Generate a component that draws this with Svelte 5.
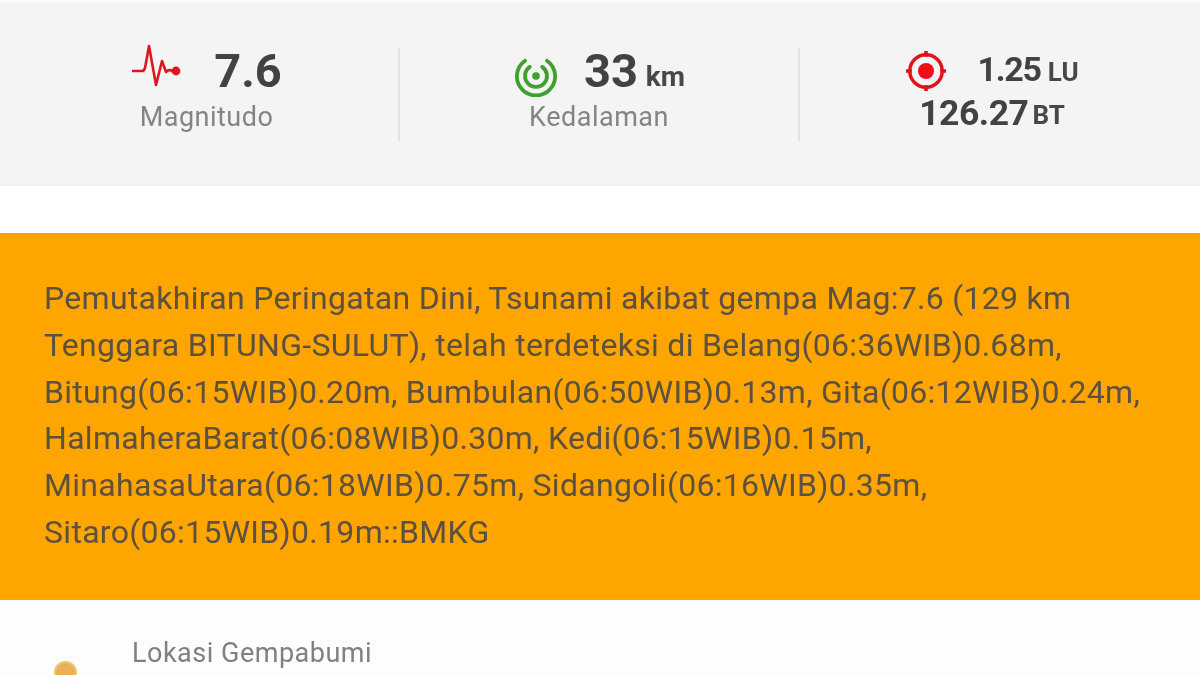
<script>
  const lines = [
    'Pemutakhiran Peringatan Dini, Tsunami akibat gempa Mag:7.6 (129 km',
    'Tenggara BITUNG-SULUT), telah terdeteksi di Belang(06:36WIB)0.68m,',
    'Bitung(06:15WIB)0.20m, Bumbulan(06:50WIB)0.13m, Gita(06:12WIB)0.24m,',
    'HalmaheraBarat(06:08WIB)0.30m, Kedi(06:15WIB)0.15m,',
    'MinahasaUtara(06:18WIB)0.75m, Sidangoli(06:16WIB)0.35m,',
    'Sitaro(06:15WIB)0.19m::BMKG'
  ];
</script>

<div class="page">
  <section class="stats">
    <div class="stat first">
      <div class="top">
        <svg class="ico pulse" viewBox="0 0 50 44" width="50" height="44">
          <path d="M1 27 H11 Q13 27 14 24 L18 2 L25 41 L31 17 L35 28 Q38 25 41 27 L46 27" fill="none" stroke="#e0161e" stroke-width="2.6" stroke-linejoin="round"/>
          <circle cx="45" cy="27" r="4.4" fill="#e5131c"/>
        </svg>
        <span class="value big">7.6</span>
      </div>
      <div class="label">Magnitudo</div>
    </div>
    <div class="stat second-col">
      <div class="top">
        <svg class="ico ring" viewBox="0 0 44 44" width="42" height="42">
          <g fill="none" stroke="#3fa02c" stroke-linecap="round">
            <path d="M10.5 6 A20 20 0 1 0 33.5 6" stroke-width="4"/>
            <path d="M15.5 12.5 A11.5 11.5 0 1 0 28.5 12.5" stroke-width="4"/>
          </g>
          <circle cx="22" cy="22" r="4" fill="#3fa02c"/>
        </svg>
        <span class="value big">33</span><span class="unit km">km</span>
      </div>
      <div class="label">Kedalaman</div>
    </div>
    <div class="stat coords">
      <div class="top">
        <svg class="ico target" viewBox="0 0 44 44" width="42" height="42">
          <circle cx="22" cy="22" r="17" fill="none" stroke="#e0151c" stroke-width="3.6"/>
          <circle cx="22" cy="22" r="8.4" fill="#ee0f18"/>
          <path d="M22 1 V7 M22 37 V43 M1 22 H7 M37 22 H43" stroke="#d9151c" stroke-width="3.8"/>
        </svg>
        <span class="value lat">1.25</span><span class="unit">LU</span>
      </div>
      <div class="second"><span class="value lon">126.27</span><span class="unit bt">BT</span></div>
    </div>
  </section>

  <div class="gap"></div>

  <section class="alert">
    {#each lines as line}
      <div>{line}</div>
    {/each}
  </section>

  <section class="row">
    <div class="pin"></div>
    <div class="rowlabel">Lokasi Gempabumi</div>
  </section>
</div>

<style>
  :global(body) { margin: 0; background: #fff; }
  .page {
    width: 1200px;
    height: 675px;
    overflow: hidden;
    font-family: Roboto, "Liberation Sans", sans-serif;
    display: flex;
    flex-direction: column;
    background: #fdfdfd;
    filter: blur(0.45px);
  }
  .stats {
    height: 183px;
    margin-top: 2px;
    flex: none;
    background: #f4f4f5;
    border-bottom: 1px solid #efefef;
    display: grid;
    grid-template-columns: 398px 400px 402px;
  }
  .stat {
    margin-top: 46px;
    height: 93px;
    border-left: 2px solid #e2e2e2;
    display: flex;
    flex-direction: column;
    align-items: center;
    box-sizing: border-box;
    color: #444;
  }
  .stat.first { border-left: none; padding-left: 15px; }
  .stat.coords { padding-right: 16px; }
  .top { display: flex; align-items: center; height: 44px; }
  .ico { flex: none; }
  .pulse { margin-right: 33px; margin-bottom: 8px; }
  .ring { margin-left: 2px; margin-right: 27px; margin-top: 12px; }
  .target { margin-right: 30px; margin-top: 2px; }
  .value { font-weight: 700; color: #424242; }
  .big { font-size: 47px; }
  .lat { font-size: 34px; letter-spacing: -1.25px; margin-top: -3px; }
  .lon { font-size: 35.5px; letter-spacing: -0.5px; }
  .unit { font-weight: 700; font-size: 26px; color: #484848; margin-left: 7px; margin-top: 3px; }
  .bt { margin-left: 4px; }
  .km { margin-left: 8px; margin-top: 12px; font-size: 28px; }
  .label { font-size: 27px; letter-spacing: 0.5px; color: #848484; margin-top: 7px; line-height: 36px; }
  .second { display: flex; align-items: center; height: 38px; margin-top: 2px; }
  .gap { height: 47px; background: #fff; flex: none; }
  .alert {
    flex: none;
    height: 367px;
    box-sizing: border-box;
    background: #fea500;
    padding: 42px 44px 0;
    font-size: 32px;
    letter-spacing: 0.3px;
    line-height: 46.8px;
    color: #5c5140;
    white-space: nowrap;
  }
  .row { position: relative; flex: 1; }
  .rowlabel { font-size: 27px; letter-spacing: 0.5px; color: #808080; padding: 36px 0 0 132px; line-height: 34px; }
  .pin {
    position: absolute;
    left: 54px;
    top: 61px;
    width: 23px;
    height: 23px;
    border-radius: 50%;
    background: #e8b155;
    border: 2px solid #efc27a;
    box-sizing: border-box;
  }
</style>
